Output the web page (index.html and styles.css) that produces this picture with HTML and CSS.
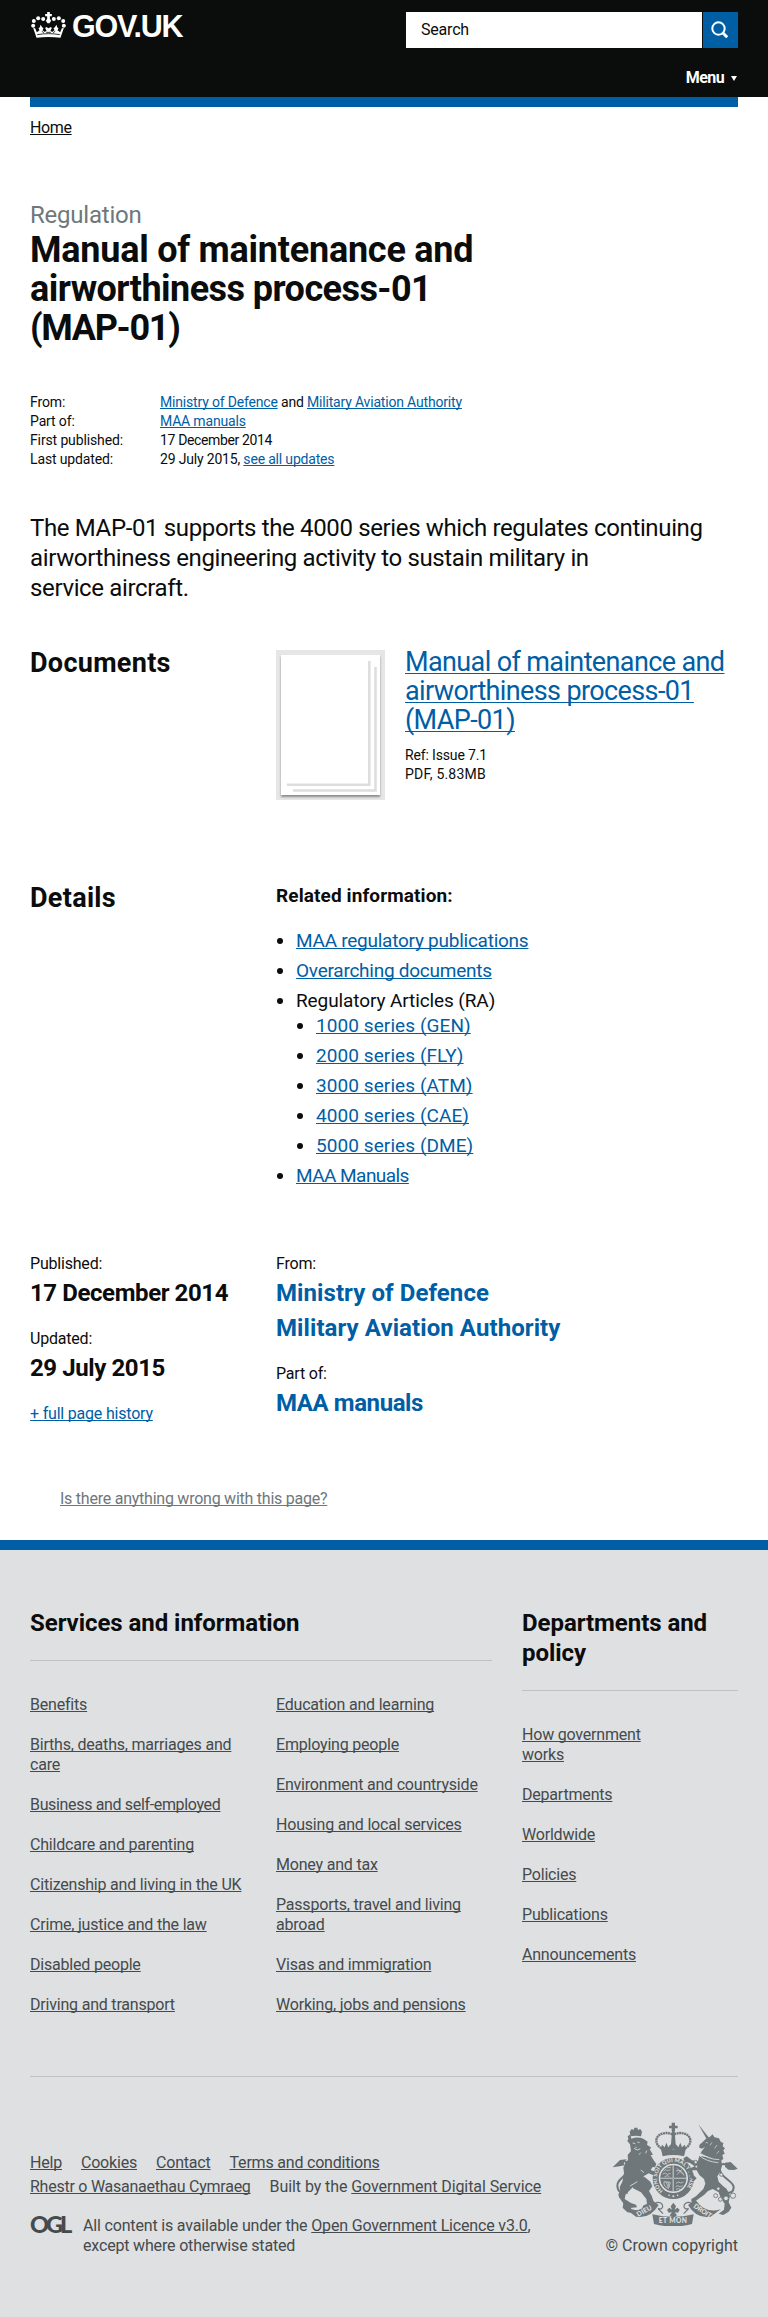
FILE: index.html
```html
<!DOCTYPE html>
<html lang="en">
<head>
<meta charset="utf-8">
<title>Manual of maintenance and airworthiness process-01 (MAP-01) - GOV.UK</title>
<link rel="stylesheet" href="styles.css">
</head>
<body>
<header class="site-header">
  <div class="wrap header-inner">
    <a class="logo" href="#">
      <svg class="crown" viewBox="0 0 104 78" aria-hidden="true">
        <g fill="#fff">
          <path d="M48 0h8v6h6v7h-6v7l4 6-5 8h-6l-5-8 4-6v-7h-6V6h6z"/>
          <circle cx="36" cy="21" r="6"/><circle cx="68" cy="21" r="6"/>
          <circle cx="21" cy="19" r="6"/><circle cx="83" cy="19" r="6"/>
          <circle cx="8" cy="27" r="6"/><circle cx="96" cy="27" r="6"/>
          <circle cx="6" cy="41" r="6"/><circle cx="98" cy="41" r="6"/>
          <path d="M6 48l6 1 5 12 8-6-3-6 4-3 2-8 5 8 4 3-3 6 7 5 5-4-4-8 3-3 7 4 7-4 3 3-4 8 5 4 7-5-3-6 4-3 5-8 2 8 4 3-3 6 8 6 5-12 6-1-10 29c-23-3-49-3-72 0z"/>
        </g>
        <path d="M18 68c22-4 46-4 68 0M32 58l6 4M66 62l6-4M45 61h14" stroke="#0b0c0c" stroke-width="2.5" fill="none"/>
      </svg>
      <span class="logo-text">GOV.UK</span>
    </a>
    <div class="header-tools">
      <form class="search">
        <div class="search-field">Search</div>
        <div class="search-button">
          <svg width="35" height="36" viewBox="0 0 35 36"><circle cx="15.5" cy="16.5" r="6.2" fill="none" stroke="#fff" stroke-width="2"/><path d="M20 21l4.2 4.3" stroke="#fff" stroke-width="3"/></svg>
        </div>
      </form>
      <a class="menu" href="#">Menu <svg width="6" height="5" viewBox="0 0 6 5"><path d="M0 0h6L3 5z" fill="#fff"/></svg></a>
    </div>
  </div>
</header>

<main class="wrap">
  <div class="blue-bar"></div>
  <nav class="breadcrumb"><a href="#">Home</a></nav>

  <p class="kind">Regulation</p>
  <h1>Manual of maintenance and<br><span class="t2">airworthiness process-01</span><br><span class="t3">(MAP-01)</span></h1>

  <dl class="meta">
    <dt>From:</dt><dd class="orgs"><a href="#">Ministry of Defence</a> and <a href="#">Military Aviation Authority</a></dd>
    <dt>Part of:</dt><dd class="orgs"><a href="#">MAA manuals</a></dd>
    <dt>First published:</dt><dd class="date">17 December 2014</dd>
    <dt>Last updated:</dt><dd class="orgs">29 July 2015, <a href="#">see all updates</a></dd>
  </dl>

  <p class="summary">The MAP-01 supports the 4000 series which regulates continuing<br>airworthiness engineering activity to sustain military in<br>service aircraft.</p>

  <section class="row documents">
    <h2>Documents</h2>
    <div class="attachment">
      <div class="thumb">
        <svg width="99" height="140" viewBox="0 0 99 140"><g fill="none" stroke="#ddd" stroke-width="2.5"><path d="M88.3 6v123.7H6"/><path d="M94.5 12v123.5H12"/></g></svg>
      </div>
      <div>
        <h3><a href="#">Manual of maintenance and<br>airworthiness process-01<br>(MAP-01)</a></h3>
        <p class="file">Ref: Issue 7.1<br><span class="pdf">PDF, 5.83MB</span></p>
      </div>
    </div>
  </section>

  <section class="row details">
    <h2>Details</h2>
    <div class="govspeak">
      <p class="strong">Related information:</p>
      <ul>
        <li><a href="#">MAA regulatory publications</a></li>
        <li><a href="#">Overarching documents</a></li>
        <li class="parent">Regulatory Articles (RA)
          <ul class="series">
            <li><a href="#">1000 series (GEN)</a></li>
            <li><a href="#">2000 series (FLY)</a></li>
            <li><a href="#">3000 series (ATM)</a></li>
            <li><a href="#">4000 series (CAE)</a></li>
            <li><a href="#">5000 series (DME)</a></li>
          </ul>
        </li>
        <li><a class="tight" href="#">MAA Manuals</a></li>
      </ul>
    </div>
  </section>

  <section class="row history">
    <div>
      <p class="label">Published:</p>
      <p class="value numeric">17 December 2014</p>
      <p class="label">Updated:</p>
      <p class="value numeric">29 July 2015</p>
      <p class="label"><a href="#">+ full page history</a></p>
    </div>
    <div>
      <p class="label">From:</p>
      <p class="value org"><a href="#">Ministry of Defence</a></p>
      <p class="value"><a href="#">Military Aviation Authority</a></p>
      <p class="label">Part of:</p>
      <p class="value numeric"><a href="#">MAA manuals</a></p>
    </div>
  </section>

  <p class="report"><a href="#">Is there anything wrong with this page?</a></p>
</main>

<footer class="site-footer">
  <div class="wrap">
    <div class="categories">
      <section>
        <h2>Services and information</h2>
        <div class="split">
          <ul>
            <li><a href="#">Benefits</a></li>
            <li><a href="#">Births, deaths, marriages and<br>care</a></li>
            <li><a class="tight" href="#">Business and self-employed</a></li>
            <li><a href="#">Childcare and parenting</a></li>
            <li><a href="#">Citizenship and living in the UK</a></li>
            <li><a href="#">Crime, justice and the law</a></li>
            <li><a href="#">Disabled people</a></li>
            <li><a href="#">Driving and transport</a></li>
          </ul>
          <ul>
            <li><a href="#">Education and learning</a></li>
            <li><a href="#">Employing people</a></li>
            <li><a href="#">Environment and countryside</a></li>
            <li><a href="#">Housing and local services</a></li>
            <li><a href="#">Money and tax</a></li>
            <li><a href="#">Passports, travel and living<br>abroad</a></li>
            <li><a href="#">Visas and immigration</a></li>
            <li><a href="#">Working, jobs and pensions</a></li>
          </ul>
        </div>
      </section>
      <section>
        <h2>Departments and<br>policy</h2>
        <ul>
          <li><a href="#">How government<br>works</a></li>
          <li><a href="#">Departments</a></li>
          <li><a href="#">Worldwide</a></li>
          <li><a href="#">Policies</a></li>
          <li><a href="#">Publications</a></li>
          <li><a href="#">Announcements</a></li>
        </ul>
      </section>
    </div>

    <div class="footer-meta">
      <div class="footer-links">
        <div class="links"><a href="#">Help</a><a href="#">Cookies</a><a href="#">Contact</a><a href="#">Terms and conditions</a></div>
        <div class="links"><a class="welsh" href="#">Rhestr o Wasanaethau Cymraeg</a><span>Built by the <a href="#">Government Digital Service</a></span></div>
        <div class="licence">
          <span class="ogl">OGL</span>
          <p>All content is available under the <a href="#">Open Government Licence v3.0</a>,<br>except where otherwise stated</p>
        </div>
      </div>
      <div class="copyright">
        <svg class="crest" width="126" height="104" viewBox="22 19 378 312" aria-hidden="true">
          <g fill="#6f777b">
            <!-- central crown -->
            <path d="M201 21h10v9h8v8h-8v9h-10v-9h-8v-8h8z"/>
            <path d="M202 46h8l1 14 2 26 6 6-6 8h-14l-6-8 6-6 2-26z"/>
            <path d="M168 99l4-12 8 8 5-14 6 14 8-8 3 14h8l3-14 8 8 6-14 5 14 8-8 4 12-6 20c-22-5-42-5-64 0z"/>
            <path d="M172 110q34-8 68 0l-2 12q-32-8-64 0z"/>
          </g>
          <path d="M203 56c-20-10-49-1-48 20 1 14 12 20 18 24M209 56c20-10 49-1 48 20-1 14-12 20-18 24" fill="none" stroke="#6f777b" stroke-width="7" stroke-dasharray="6 1.5"/>
          <!-- garter and shield -->
          <circle cx="206" cy="188" r="53" fill="none" stroke="#6f777b" stroke-width="18"/>
          <path id="garter" d="M175 226a49 49 0 1 1 62 0" fill="none"/>
          <text class="motto" fill="#dee0e2" font-size="16"><textPath href="#garter" textLength="226">HONI SOIT QUI MAL Y PENSE</textPath></text>
          <circle cx="206" cy="188" r="40" fill="#6f777b"/>
          <path d="M206 148v80M166 188h80" stroke="#dee0e2" stroke-width="4"/>
          <path d="M206 148v80M166 188h80" stroke="#6f777b" stroke-width="1.5"/>
          <circle cx="206" cy="188" r="41" fill="none" stroke="#dee0e2" stroke-width="2"/>
          <g fill="none" stroke="#dee0e2" stroke-width="2">
            <path d="M176 166l7-4 6 3 8-3M174 175l8-3 6 4 10-3M180 183l8-3 6 3M185 157l8-2 6 2M214 203l8-4 6 3 8-3M213 213l7-3 6 4 8-4M214 221l7-2 6 2"/>
            <path d="M217 158l17 17M232 161l-15 16M214 166q16-7 24 14"/>
            <path d="M178 198q-2 16 14 20l5-18zM184 199l7 17M190 199l3 13"/>
          </g>
          <g fill="#dee0e2"><circle cx="193" cy="239" r="2.5"/><circle cx="206" cy="242" r="3"/><circle cx="219" cy="239" r="2.5"/></g>
          <!-- lion -->
          <g fill="#6f777b">
            <path d="M78 62l-3-14 6-8 6 3 2-7h9l2 7 7-3 5 8-3 14q-16-4-31 0z"/>
            <path d="M80 69q18-7 36 0l13 9-2 9 13 9-5 5 10 16-7 2 9 15 8 11-4 10-7-1-6 9 14 5-6 11-14-6-14 8-6 16 13 13-1 9-22-13-17 8-14 14-8 8-3 14 19 12 15 5 3 8-28 3-12-14-14-19-2-9 6-9-2-13 8-16 5-26-2-16 6-13 8-10-1-15 10-12-3-20-8-10 3-7-2-7 8-6z"/>
            <path d="M84 190l36-6 17 14 6 14-10 14 8 14 6 18-6 14-14 8-14-2 2-8 12-6-2-14-16-20-24-12z"/>
            <path d="M24 155l22-22 20-2-9 12 4 6-16 3z"/>
            <path d="M56 262l16 2 8 16 18 5-4 8-26-3-14-14z"/>
          </g>
          <path d="M60 140c22-9 21 14 12 26-17 22-35 27-34 45 1 17 13 26 31 20" fill="none" stroke="#6f777b" stroke-width="6"/>
          <path d="M84 82l8 2M98 79l7 2M88 98l10 5 9-4M92 93l4 4M108 111l-5 6M126 105l-3 8M108 163l10 8M76 211l22-13M72 246l10-9" fill="none" stroke="#dee0e2" stroke-width="2.5"/>
          <!-- unicorn -->
          <g fill="#6f777b">
            <path d="M281 26L313 66L306 70Z"/>
            <path d="M304 69L316 63L324 56L329 65L343 68L348 78L356 82L354 92L361 98L356 104L360 114L353 118L356 130L346 136L286 114L292 105L301 94L291 99L284 96L284 88L294 79Z"/>
            <path d="M284 120L350 132L352 150L346 170L338 182L342 198L354 210L366 220L376 240L372 260L380 276L372 288L356 298L342 294L358 282L360 264L348 246L342 230L324 220L310 226L298 238L284 248L268 260L260 258L260 250L274 242L286 230L296 220L302 204L298 190L284 178L276 164L262 164L266 178L276 188L268 196L256 184L252 160L270 152L256 142L240 138L236 128L246 122L262 134L280 136Z"/>
            <path d="M361 141l17-2 21 20-11 4-17-1-10-9z"/>
          </g>
          <path d="M365 147c-22-8-24 13-13 30 16 17 35 24 35 38 0 15-12 20-29 13" fill="none" stroke="#6f777b" stroke-width="6"/>
          <path d="M286 111q22 20 58 21M283 119q22 19 58 22" fill="none" stroke="#dee0e2" stroke-width="2.5"/>
          <path d="M303 80l7 2M322 80l-6 9M337 88l-7 10M343 106l-7 8" fill="none" stroke="#dee0e2" stroke-width="2"/>
          <g fill="#dee0e2" stroke="#6f777b" stroke-width="2.5">
            <circle cx="273" cy="139" r="5"/><circle cx="275" cy="153" r="4"/><circle cx="333" cy="240" r="6"/><circle cx="347" cy="251" r="6"/><circle cx="364" cy="248" r="7"/><circle cx="385" cy="240" r="8"/><circle cx="341" cy="219" r="5"/><circle cx="350" cy="177" r="5"/>
          </g>
          <!-- scroll and thistle badge -->
          <g fill="#6f777b">
            <path d="M64 281q45 15 76-29l22 16q-26 43-68 35z"/>
            <path d="M348 281q-45 15-76-29l-22 16q26 43 68 35z"/>
            <path d="M143 296q63 15 124 0l-5 29q-56 15-114 0z"/>
            <path d="M206 261l8 11-4 10 8-6 7 6-5 9-10-1 7 9-11 8-11-8 7-9-10 1-5-9 7-6 8 6-4-10z"/>
          </g>
          <path d="M149 264q17-9 24 3c4 9-4 16-13 11M160 279l15 15M263 264q-17-9-24 3c-4 9 4 16 13 11M252 279l-15 15" fill="none" stroke="#6f777b" stroke-width="3.5"/>
          <g class="motto" fill="#dee0e2" font-size="20">
            <text transform="translate(100 303) rotate(-27)" textLength="49">DIEU</text>
            <text x="162" y="323" textLength="85">ET MON</text>
            <text transform="translate(265 275) rotate(33)" textLength="60">DROIT</text>
          </g>
        </svg>
        <a href="#">© Crown copyright</a>
      </div>
    </div>
  </div>
</footer>
</body>
</html>
```
FILE: styles.css
```css
* { box-sizing: border-box; }
body {
  margin: 0;
  background: #fff;
  color: #0b0c0c;
  font: 16px/20px Roboto, "Liberation Sans", sans-serif;
  letter-spacing: -0.2px;
}
h1, h2, h3, p, ul, dl, dd { margin: 0; padding: 0; }
ul { list-style: none; }
a {
  color: #005ea5;
  text-decoration: underline;
  text-decoration-thickness: 1px;
  text-underline-offset: 1px;
  text-decoration-skip-ink: none;
}
h1, h2, h3, p, li, dt, dd, a { white-space: nowrap; }
.wrap { margin: 0 30px; }

.site-header { height: 97px; background: #0b0c0c; }
.header-inner { display: flex; justify-content: space-between; padding-top: 12px; }
.logo { display: flex; height: 26px; gap: 6px; margin-left: 1px; text-decoration: none; color: #fff; }
.crown { width: 35px; height: 26px; }
.logo-text { font: bold 30.5px/28px "Liberation Sans", sans-serif; letter-spacing: -1.2px; }
.header-tools { width: 332px; }
.search { display: flex; gap: 1px; }
.search-field { flex: 1; height: 36px; padding-left: 15px; background: #fff; line-height: 35px; }
.search-button { width: 35px; height: 36px; background: #005ea5; }
.search-button svg { display: block; }
.menu { display: flex; justify-content: flex-end; align-items: center; gap: 7px; margin: 20px 1px 0 0; color: #fff; font-weight: 700; letter-spacing: -0.6px; text-decoration: none; }

.blue-bar { height: 10px; background: #005ea5; }
.breadcrumb { padding-top: 11px; letter-spacing: -0.35px; }
.breadcrumb a { color: #0b0c0c; }
.kind { margin-top: 62px; color: #6f777b; font-size: 24px; line-height: 30px; letter-spacing: -0.22px; }
h1 { padding-top: 1px; font-size: 36px; line-height: 39px; letter-spacing: -0.24px; }
.t2 { letter-spacing: -0.55px; }
.t3 { letter-spacing: -1.3px; }
.meta { display: grid; grid-template-columns: 130px 1fr; margin-top: 45px; font-size: 14px; line-height: 19px; letter-spacing: -0.13px; }
.meta .date { letter-spacing: -0.36px; }
.meta .orgs { letter-spacing: -0.18px; }
.summary { margin-top: 44px; font-size: 24px; line-height: 30px; letter-spacing: -0.36px; }

.row { display: grid; grid-template-columns: 246px 1fr; }
.row h2 { font-size: 27px; line-height: 30px; letter-spacing: 0.3px; }
.documents { margin-top: 45px; }
.attachment { display: flex; gap: 25px; padding-left: 5px; }
.thumb { width: 99px; height: 140px; margin-top: 7px; background: #fff; outline: 5px solid #e6e6e7; }
.thumb svg { display: block; filter: drop-shadow(0 0 0 transparent); box-shadow: 0 2px 2px #8a8c8c; }
.attachment h3 { font-size: 27px; line-height: 29px; font-weight: 400; letter-spacing: -0.62px; }
.attachment h3 a { text-underline-offset: 2px; }
.file { margin-top: 11px; font-size: 14px; line-height: 19px; letter-spacing: -0.15px; }
.pdf { letter-spacing: 0.2px; }

.details { margin-top: 88px; font-size: 19px; line-height: 25px; letter-spacing: -0.25px; }
.details .strong { font-weight: 700; letter-spacing: 0.1px; }
.govspeak > ul { margin-top: 20px; padding-left: 20px; }
.govspeak li { display: list-item; list-style: disc; margin-bottom: 5px; }
.govspeak ul ul { padding-left: 20px; letter-spacing: 0.08px; }
.govspeak .parent { margin-bottom: 0; letter-spacing: -0.1px; }
.govspeak .tight { letter-spacing: -0.55px; }

.history { margin-top: 61px; }
.label { line-height: 20px; }
.value { font-size: 24px; font-weight: 700; line-height: 30px; letter-spacing: 0.08px; margin: 4px 0 21px; }
.value.org { margin-bottom: 5px; }
.value.numeric { letter-spacing: -0.41px; }
.value.org + .value { margin-top: 0; }
.value a { text-decoration: none; }
.report { margin: 50px 0 0 30px; letter-spacing: -0.24px; }
.report a { color: #6f777b; }

.site-footer { margin-top: 31px; height: 777px; border-top: 10px solid #005ea5; background: #dee0e2; color: #454a4c; }
.site-footer a { color: #454a4c; }
.categories { display: grid; grid-template-columns: 462px 216px; gap: 30px; padding-top: 58px; height: 526px; }
.categories h2 { color: #0b0c0c; font-size: 24px; line-height: 30px; letter-spacing: -0.05px; padding-bottom: 22px; border-bottom: 1px solid #bfc1c3; }
.categories ul { margin-top: 34px; }
.categories li { margin-bottom: 20px; }
.categories .tight { letter-spacing: -0.34px; }
.split { display: grid; grid-template-columns: 246px 1fr; }
.footer-meta { display: flex; justify-content: space-between; border-top: 1px solid #bfc1c3; }
.footer-links { padding-top: 74px; line-height: 24px; }
.links { display: flex; gap: 19px; }
.welsh { letter-spacing: -0.25px; }
.links span { letter-spacing: -0.08px; }
.licence { display: flex; margin-top: 17px; line-height: 20px; }
.ogl { width: 53px; font: 900 23.5px/17px Lato, sans-serif; letter-spacing: -3px; }
.licence p { letter-spacing: -0.17px; }
.copyright { display: flex; flex-direction: column; align-items: flex-end; padding-top: 45px; }
.crest { display: block; }
.copyright a { margin-top: 10px; text-decoration: none; letter-spacing: 0; }
.motto { font-family: Lato, sans-serif; font-weight: 900; letter-spacing: 0; }
```
